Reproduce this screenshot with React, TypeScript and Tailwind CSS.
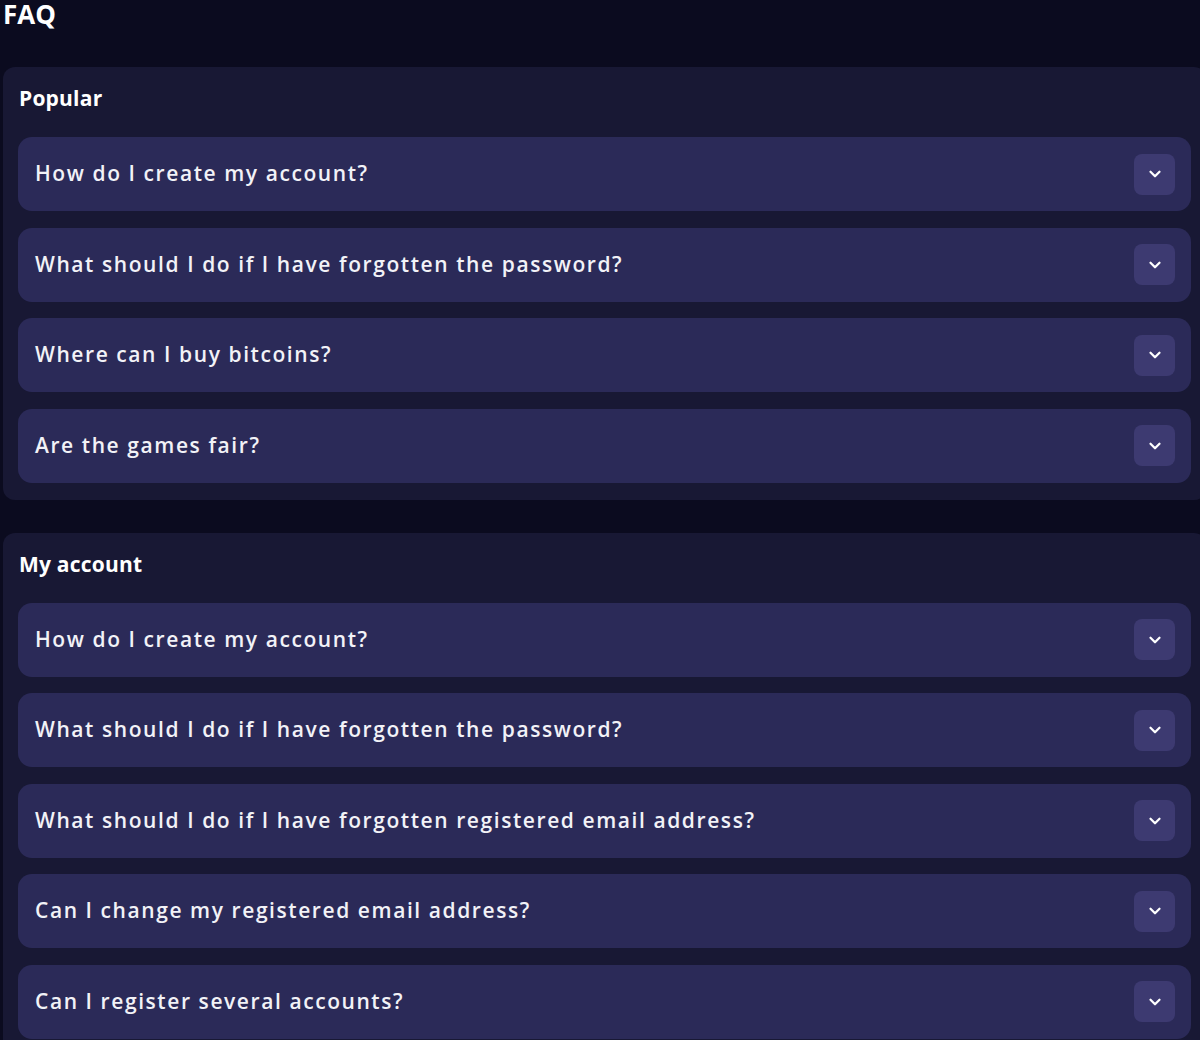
import { ChevronDown } from 'lucide-react'

const sections = [
  {
    title: 'Popular',
    items: [
      'How do I create my account?',
      'What should I do if I have forgotten the password?',
      'Where can I buy bitcoins?',
      'Are the games fair?',
    ],
  },
  {
    title: 'My account',
    items: [
      'How do I create my account?',
      'What should I do if I have forgotten the password?',
      'What should I do if I have forgotten registered email address?',
      'Can I change my registered email address?',
      'Can I register several accounts?',
    ],
  },
]

function FaqItem({ question }: { question: string }) {
  return (
    <div className="h-[74px] rounded-[14px] bg-[#2b2a58] flex items-center justify-between pl-[17px] pr-[16px]">
      <span className="text-[21px] font-semibold tracking-[0.075em] text-[#f2f2f7]">{question}</span>
      <button className="w-[41px] h-[41px] rounded-[8px] bg-[#3d3a71] flex items-center justify-center text-white">
        <ChevronDown size={18} strokeWidth={3} />
      </button>
    </div>
  )
}

export default function App() {
  return (
    <div
      className="w-[1200px] h-[1040px] overflow-hidden bg-[#0b0b1f] pl-[3px]"
      style={{ fontFamily: '"Open Sans", "Noto Sans", sans-serif' }}
    >
      <h1 className="text-[26px] leading-[28px] font-bold text-white mb-[39px]">FAQ</h1>

      <div className="flex flex-col gap-[33px]">
        {sections.map(section => (
          <div key={section.title} className="w-[1203px] rounded-[12px] bg-[#181834] px-[15px] pt-[17px] pb-[17px]">
            <h2 className="text-[21px] leading-[28px] font-bold tracking-[0.01em] text-white pl-[1px] mb-[25px]">{section.title}</h2>
            <div className="flex flex-col gap-[16.5px]">
              {section.items.map((q, i) => (
                <FaqItem key={i} question={q} />
              ))}
            </div>
          </div>
        ))}
      </div>
    </div>
  )
}
